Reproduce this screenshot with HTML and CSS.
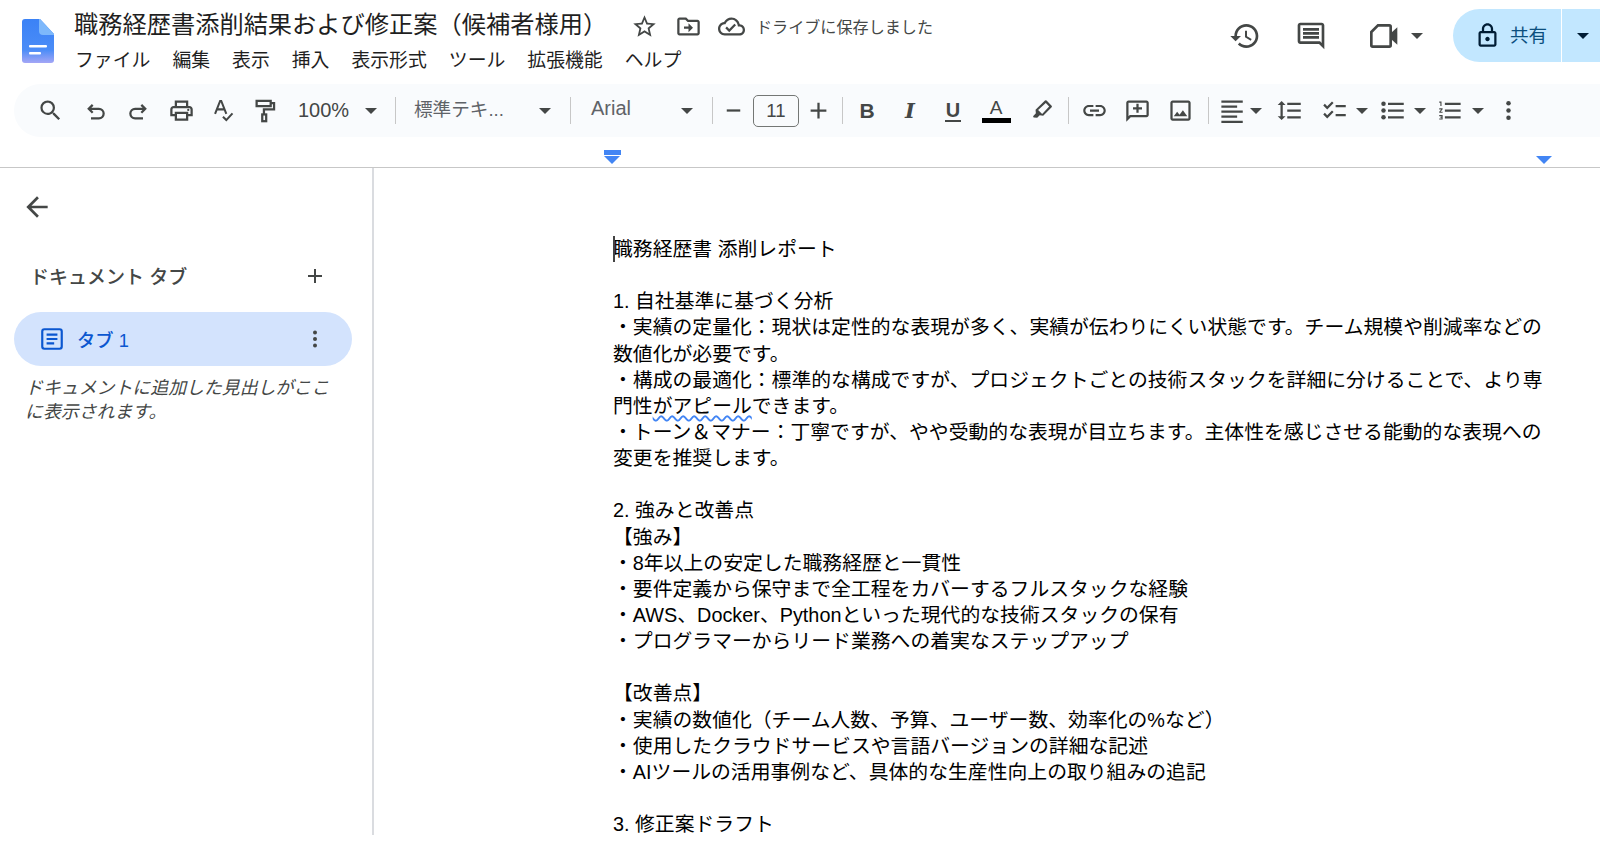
FILE: index.html
```html
<!DOCTYPE html>
<html lang="ja">
<head>
    <meta charset="UTF-8">
    <title>職務経歴書添削結果および修正案（候補者様用）</title>
    <link rel="stylesheet" href="styles.css">
</head>
<body>
<div class="app">
    <header class="header">
        <svg class="logo" viewBox="0 0 32 44">
            <defs>
                <linearGradient id="logoFill" x1="0" y1="0" x2="0" y2="1">
                    <stop offset="0" stop-color="#3b82f6"/>
                    <stop offset="0.7" stop-color="#4a8cf7"/>
                    <stop offset="1" stop-color="#a4a6f6"/>
                </linearGradient>
            </defs>
            <path fill="url(#logoFill)" d="M3 0H18L32 15V41a3 3 0 0 1-3 3H3a3 3 0 0 1-3-3V3a3 3 0 0 1 3-3Z"/>
            <path fill="#7db8fb" d="M17 0H18L32 15V16H21a4 4 0 0 1-4-4Z"/>
            <rect x="7" y="26" width="18" height="2.5" rx="1" fill="#fff"/>
            <rect x="7" y="33" width="12" height="2.5" rx="1" fill="#fff"/>
        </svg>
        <div class="title-col">
            <div class="title-row">
                <span class="doc-title">職務経歴書添削結果および修正案（候補者様用）</span>
                <svg class="icon star" viewBox="0 0 24 24"><path d="M22 9.24l-7.19-.62L12 2 9.19 8.63 2 9.24l5.46 4.73L5.82 21 12 17.27 18.18 21l-1.63-7.03L22 9.24zM12 15.4l-3.76 2.27 1-4.28-3.32-2.88 4.38-.38L12 6.1l1.71 4.04 4.38.38-3.32 2.88 1 4.28L12 15.4z"/></svg>
                <svg class="icon folder" viewBox="0 0 24 24"><path d="M20 6h-8l-2-2H4c-1.1 0-2 .9-2 2v12c0 1.1.9 2 2 2h16c1.1 0 2-.9 2-2V8c0-1.1-.9-2-2-2zm0 12H4V6h5.17l2 2H20v10zm-8-1l4-4-4-4v3H8v2h4v3z"/></svg>
                <svg class="icon cloud" viewBox="0 0 24 24"><path d="M19.35 10.04C18.67 6.59 15.64 4 12 4 9.11 4 6.6 5.64 5.35 8.04 2.34 8.36 0 10.91 0 14c0 3.31 2.69 6 6 6h13c2.76 0 5-2.24 5-5 0-2.64-2.05-4.78-4.65-4.96zM19 18H6c-2.21 0-4-1.79-4-4 0-2.05 1.53-3.76 3.56-3.97l1.07-.11.5-.95C8.08 7.14 9.94 6 12 6c2.62 0 4.88 1.86 5.39 4.43l.3 1.5 1.53.11c1.56.1 2.78 1.41 2.78 2.96 0 1.65-1.35 3-3 3zm-9-3.82l-2.09-2.09L6.5 13.5 10 17l6.01-6.01-1.41-1.41z"/></svg>
                <span class="saved">ドライブに保存しました</span>
            </div>
            <nav class="menu">
                <span>ファイル</span><span>編集</span><span>表示</span><span>挿入</span><span>表示形式</span><span>ツール</span><span>拡張機能</span><span>ヘルプ</span>
            </nav>
        </div>
        <div class="actions">
            <svg class="icon action-history" viewBox="0 0 24 24"><path d="M13 3c-4.97 0-9 4.03-9 9H1l3.89 3.89.07.14L9 12H6c0-3.87 3.13-7 7-7s7 3.13 7 7-3.13 7-7 7c-1.93 0-3.68-.79-4.94-2.06l-1.42 1.42C8.27 19.99 10.51 21 13 21c4.97 0 9-4.03 9-9s-4.03-9-9-9zm-1 5v5l4.28 2.54.72-1.21-3.5-2.08V8H12z"/></svg>
            <svg class="icon action-comment" viewBox="0 0 24 24"><path d="M21.99 4c0-1.1-.89-2-1.99-2H4c-1.1 0-2 .9-2 2v12c0 1.1.9 2 2 2h14l4 4-.01-18zM20 4v13.17L18.83 16H4V4h16zM6 12h12v2H6zm0-3h12v2H6zm0-3h12v2H6z"/></svg>
            <svg class="icon action-meet" viewBox="0 0 24 24"><path class="outline" d="M2.5 9 7.5 4H16a1 1 0 0 1 1 1v14a1 1 0 0 1-1 1H3.500a1 1 0 0 1-1-1Z"/><path d="M17 10 22 5.500V18.500L17 14Z"/></svg>
            <i class="caret action-caret"></i>
            <div class="share">
                <div class="share-main">
                    <svg class="icon lock" viewBox="0 0 24 24"><path d="M18 8h-1V6c0-2.76-2.24-5-5-5S7 3.24 7 6v2H6c-1.1 0-2 .9-2 2v10c0 1.1.9 2 2 2h12c1.1 0 2-.9 2-2V10c0-1.1-.9-2-2-2zM9 6c0-1.66 1.34-3 3-3s3 1.34 3 3v2H9V6zm9 14H6V10h12v10zm-6-3c1.1 0 2-.9 2-2s-.9-2-2-2-2 .9-2 2 .9 2 2 2z"/></svg>
                    <span class="share-label">共有</span>
                </div>
                <div class="share-more"><i class="caret caret-dark"></i></div>
            </div>
        </div>
    </header>

    <div class="toolbar">
        <div class="btn btn-search"><svg class="icon" viewBox="0 0 24 24"><path d="M15.5 14h-.79l-.28-.27A6.471 6.471 0 0 0 16 9.500 6.500 6.500 0 1 0 9.500 16c1.610 0 3.090-.59 4.230-1.570l.27.28v.79l5 4.990L20.490 19l-4.990-5zm-6 0C7.010 14 5 11.990 5 9.500S7.010 5 9.500 5 14 7.010 14 9.500 11.990 14 9.500 14z"/></svg></div>
        <div class="btn"><svg class="icon" viewBox="0 0 24 24"><path class="outline" d="M9.500 7 6 10.500 9.500 14M6 10.500H15a4 4 0 0 1 0 8.500H8"/></svg></div>
        <div class="btn"><svg class="icon" viewBox="0 0 24 24"><path class="outline" d="M14.500 7 18 10.500 14.500 14M18 10.500H9a4 4 0 0 0 0 8.500H16"/></svg></div>
        <div class="btn"><svg class="icon" viewBox="0 0 24 24"><path d="M19 8h-1V3H6v5H5c-1.660 0-3 1.340-3 3v6h4v4h12v-4h4v-6c0-1.660-1.340-3-3-3zM8 5h8v3H8V5zm8 12v2H8v-4h8v2zm2-2v-2H6v2H4v-4c0-.55.45-1 1-1h14c.55 0 1 .45 1 1v4h-2z"/><circle cx="18" cy="11.500" r="1"/></svg></div>
        <div class="btn btn-narrow"><svg class="icon" viewBox="0 0 24 24"><path class="outline thin" d="M4.500 15 9 3.500H10L14.500 15M6 11H13M11.500 17.500 14.500 20.500 20 14.500"/></svg></div>
        <div class="btn btn-narrow"><svg class="icon" viewBox="0 0 24 24"><path class="outline" d="M17.500 3.500H5V8H17.500ZM17.500 5.500H20.500V11H11.500V15"/><rect class="outline" x="10" y="15.500" width="3.500" height="6"/></svg></div>
        <div class="select select-zoom"><span>100%</span><i class="caret"></i></div>
        <div class="sep"></div>
        <div class="select select-style"><span class="select-label label-style">標準テキ...</span><i class="caret"></i></div>
        <div class="sep"></div>
        <div class="select select-font"><span class="select-label">Arial</span><i class="caret"></i></div>
        <div class="sep"></div>
        <div class="font-size">
            <svg class="icon" viewBox="0 0 24 24"><path d="M6 11h12v2H6z"/></svg>
            <div class="size-box">11</div>
            <svg class="icon" viewBox="0 0 24 24"><path d="M19 13h-6v6h-2v-6H5v-2h6V5h2v6h6v2z"/></svg>
        </div>
        <div class="sep"></div>
        <div class="btn btn-bold">B</div>
        <div class="btn btn-italic">I</div>
        <div class="btn"><span class="btn-under">U</span></div>
        <div class="btn"><span class="btn-color">A</span></div>
        <div class="btn btn-mark"><svg class="icon" viewBox="0 0 24 24"><path d="M16.500 3.200 21 7.700a1 1 0 0 1 0 1.400L13.500 16.600 10.400 16.200 8.200 18.400 5 18.200 4.500 17 7 14.500 6.700 11.400 15.100 3.200a1 1 0 0 1 1.400 0ZM9 11.500 12.600 15 18.800 8.400 15.800 5.400Z" fill-rule="evenodd"/></svg></div>
        <div class="sep sep-color"></div>
        <div class="btn btn-first"><svg class="icon" viewBox="0 0 24 24"><path d="M3.900 12c0-1.710 1.390-3.100 3.100-3.100h4V7H7c-2.760 0-5 2.240-5 5s2.240 5 5 5h4v-1.900H7c-1.710 0-3.100-1.390-3.100-3.100zM8 13h8v-2H8v2zm9-6h-4v1.900h4c1.710 0 3.100 1.390 3.100 3.100s-1.390 3.100-3.100 3.100h-4V17h4c2.760 0 5-2.240 5-5s-2.240-5-5-5z"/></svg></div>
        <div class="btn"><svg class="icon" viewBox="0 0 24 24"><path d="M20 3H4c-1.100 0-2 .9-2 2v17l4-4h14c1.100 0 2-.9 2-2V5c0-1.100-.9-2-2-2zm0 13H5.170L4 17.170V5h16v11z"/><path d="M11 6h2v3h3v2h-3v3h-2v-3H8V9h3z"/></svg></div>
        <div class="btn"><svg class="icon" viewBox="0 0 24 24"><path d="M19 5v14H5V5h14m0-2H5c-1.100 0-2 .9-2 2v14c0 1.100.9 2 2 2h14c1.100 0 2-.9 2-2V5c0-1.100-.9-2-2-2zm-4.860 8.860l-3 3.870L9 13.140 6 17h12l-3.860-5.140z"/></svg></div>
        <div class="sep sep-list"></div>
        <div class="btn btn-align"><svg class="icon" viewBox="0 0 24 24"><path d="M3 3h19v2H3zM3 7.500h14v2H3zM3 12h19v2H3zM3 16.500h14v2H3zM3 21h19v2H3z"/></svg></div>
        <div class="caret-wrap caret-align"><i class="caret"></i></div>
        <div class="btn btn-spacing"><svg class="icon" viewBox="0 0 24 24"><path d="M6 7h2.500L5 3.500 1.500 7H4v10H1.500L5 20.500 8.500 17H6V7zm4-2v2h12V5H10zm0 14h12v-2H10v2zm0-6h12v-2H10v2z"/></svg></div>
        <div class="btn btn-list"><svg class="icon" viewBox="0 0 24 24"><path d="M22 7h-9v2h9V7zm0 8h-9v2h9v-2zM5.540 11L2 7.460l1.410-1.410 2.120 2.120 4.240-4.240 1.410 1.410L5.540 11zm0 8L2 15.460l1.410-1.410 2.120 2.120 4.240-4.240 1.410 1.410L5.540 19z"/></svg></div>
        <div class="caret-wrap"><i class="caret"></i></div>
        <div class="btn btn-list"><svg class="icon" viewBox="0 0 24 24"><circle cx="4" cy="6" r="2"/><circle cx="4" cy="12" r="2"/><circle cx="4" cy="18" r="2"/><path d="M8 5h14v2H8zM8 11h14v2H8zM8 17h14v2H8z"/></svg></div>
        <div class="caret-wrap"><i class="caret"></i></div>
        <div class="btn btn-list"><svg class="icon" viewBox="0 0 24 24"><path d="M2 17h2v.5H3v1h1v.5H2v1h3v-4H2v1zm1-9h1V4H2v1h1v3zm-1 3h1.800L2 13.100v.9h3v-1H3.200L5 10.900V10H2v1zm5-6v2h14V5H7zm0 14h14v-2H7v2zm0-6h14v-2H7v2z"/></svg></div>
        <div class="caret-wrap"><i class="caret"></i></div>
        <div class="btn btn-more"><svg class="icon" viewBox="0 0 24 24"><circle cx="12" cy="5.500" r="2"/><circle cx="12" cy="12" r="2"/><circle cx="12" cy="18.500" r="2"/></svg></div>
    </div>

    <div class="ruler">
        <div class="marker-left"></div>
        <div class="marker-right"></div>
    </div>

    <main class="main">
        <aside class="sidebar">
            <svg class="icon back" viewBox="0 0 24 24"><path d="M20 11H7.830l5.590-5.590L12 4l-8 8 8 8 1.410-1.410L7.830 13H20v-2z"/></svg>
            <div class="tabs-head">
                <span>ドキュメント タブ</span>
                <svg class="icon" viewBox="0 0 24 24"><path d="M19 13h-6v6h-2v-6H5v-2h6V5h2v6h6v2z"/></svg>
            </div>
            <div class="tab">
                <svg class="tab-icon" viewBox="0 0 24 24"><rect class="tab-outline" x="3" y="3" width="18" height="18" rx="2"/><path d="M7 7h10v2H7zM7 11h10v2H7zM7 15h7v2H7z"/></svg>
                <span class="tab-name">タブ 1</span>
                <svg class="icon tab-more" viewBox="0 0 24 24"><circle cx="12" cy="5.500" r="2"/><circle cx="12" cy="12" r="2"/><circle cx="12" cy="18.500" r="2"/></svg>
            </div>
            <p class="hint">ドキュメントに追加した見出しがここに表示されます。</p>
        </aside>
        <section class="doc">
            <div class="line"><span class="cursor"></span>職務経歴書 添削レポート</div>
            <div class="line"></div>
            <div class="line">1. 自社基準に基づく分析</div>
            <div class="line">・実績の定量化：現状は定性的な表現が多く、実績が伝わりにくい状態です。チーム規模や削減率などの</div>
            <div class="line">数値化が必要です。</div>
            <div class="line">・構成の最適化：標準的な構成ですが、プロジェクトごとの技術スタックを詳細に分けることで、より専</div>
            <div class="line">門性<span class="squiggle">がアピール</span>できます。</div>
            <div class="line">・トーン＆マナー：丁寧ですが、やや受動的な表現が目立ちます。主体性を感じさせる能動的な表現への</div>
            <div class="line">変更を推奨します。</div>
            <div class="line"></div>
            <div class="line">2. 強みと改善点</div>
            <div class="line">【強み】</div>
            <div class="line">・8年以上の安定した職務経歴と一貫性</div>
            <div class="line">・要件定義から保守まで全工程をカバーするフルスタックな経験</div>
            <div class="line">・AWS、Docker、Pythonといった現代的な技術スタックの保有</div>
            <div class="line">・プログラマーからリード業務への着実なステップアップ</div>
            <div class="line"></div>
            <div class="line">【改善点】</div>
            <div class="line">・実績の数値化（チーム人数、予算、ユーザー数、効率化の%など）</div>
            <div class="line">・使用したクラウドサービスや言語バージョンの詳細な記述</div>
            <div class="line">・AIツールの活用事例など、具体的な生産性向上の取り組みの追記</div>
            <div class="line"></div>
            <div class="line">3. 修正案ドラフト</div>
        </section>
    </main>
</div>
</body>
</html>
```

FILE: styles.css
```css
* {
    box-sizing: border-box;
}
html, body {
    margin: 0;
    height: 100%;
    overflow: hidden;
    background: #fff;
}
body {
    font-family: "Liberation Sans", "Noto Sans CJK JP", sans-serif;
    color: #1f1f1f;
}
.app {
    height: 835px;
    display: flex;
    flex-direction: column;
    overflow: hidden;
}
.icon {
    width: 27px;
    height: 27px;
    fill: #444746;
    flex: none;
    display: block;
}
.outline {
    fill: none;
    stroke: #444746;
    stroke-width: 2;
}
.thin {
    stroke-width: 1.800;
}

/* header */
.header {
    height: 84px;
    display: flex;
    padding-left: 22px;
    flex: none;
}
.logo {
    width: 32px;
    height: 44px;
    margin-top: 19px;
    flex: none;
}
.title-col {
    margin-left: 21px;
    flex: none;
}
.title-row {
    height: 34px;
    margin-top: 9px;
    display: flex;
    align-items: center;
}
.doc-title {
    font-size: 24.240px;
    line-height: 34px;
    width: 556px;
    margin-left: -1px;
    white-space: nowrap;
    position: relative;
    top: -1px;
}
.star {
    margin-left: 1px;
}
.folder {
    margin-left: 17px;
}
.cloud {
    margin-left: 16px;
}
.saved {
    margin-left: 11px;
    font-size: 16.100px;
    color: #444746;
}
.menu {
    display: flex;
    gap: 22px;
    margin-top: 4px;
    font-size: 18.850px;
    line-height: 28px;
}
.actions {
    margin-left: auto;
    display: flex;
    align-items: flex-start;
    padding-top: 9px;
}
.action-history, .action-comment {
    width: 32px;
    height: 32px;
    margin-top: 11px;
}
.action-comment {
    margin-left: 34px;
}
.action-meet {
    width: 32px;
    height: 32px;
    margin-top: 11px;
    margin-left: 41px;
}
.action-caret {
    margin: 24px 0 0 11px;
}
.share {
    width: 147px;
    height: 53px;
    margin-left: 30px;
    background: #c2e7ff;
    border-radius: 27px 0 0 27px;
    display: flex;
    color: #0b4f7e;
    font-size: 18.600px;
}
.share-main {
    width: 108px;
    display: flex;
    align-items: center;
    padding-left: 21px;
    gap: 9px;
}
.share-label {
    margin-bottom: 4px;
}
.lock {
    fill: #001d35;
    margin-bottom: 1px;
}
.share-more {
    flex: 1;
    border-left: 1px solid #fff;
    display: flex;
    align-items: center;
    justify-content: center;
    padding-left: 4px;
}
.caret {
    display: block;
    width: 0;
    height: 0;
    border-left: 6px solid transparent;
    border-right: 6px solid transparent;
    border-top: 6px solid #444746;
    flex: none;
}
.caret-dark {
    border-top-color: #001d35;
}

/* toolbar */
.toolbar {
    height: 53px;
    margin-left: 14px;
    padding-left: 14.500px;
    background: #f9fbfd;
    border-radius: 27px 0 0 27px;
    display: flex;
    align-items: center;
    flex: none;
    color: #444746;
}
.btn {
    width: 43px;
    height: 32px;
    display: flex;
    align-items: center;
    justify-content: center;
    flex: none;
}
.btn-search {
    margin-right: 2px;
}
.btn-narrow {
    width: 41px;
}
.select {
    display: flex;
    align-items: center;
    justify-content: space-between;
    flex: none;
    font-size: 18.600px;
}
.select-label {
    position: relative;
    top: -2px;
}
.label-style {
    top: -3px;
}
.select-zoom {
    width: 110.500px;
    padding: 0 18px 0 13.500px;
    font-size: 20px;
}
.select-style {
    width: 174px;
    padding: 0 19px 0 18px;
    color: #5f6368;
}
.select-font {
    width: 141px;
    padding: 0 19px 0 20px;
    color: #5f6368;
    font-size: 20px;
}
.sep {
    width: 1px;
    height: 27px;
    background: #c7c7c7;
    flex: none;
}
.sep-color {
    margin-left: 5.500px;
}
.sep-list {
    margin-left: 6.500px;
}
.font-size {
    width: 129px;
    padding: 0 10px 0 7px;
    display: flex;
    align-items: center;
    justify-content: space-between;
    flex: none;
}
.size-box {
    width: 46px;
    height: 32px;
    border: 1px solid #747775;
    border-radius: 5px;
    display: flex;
    align-items: center;
    justify-content: center;
    font-size: 18.600px;
    color: #444746;
}
.btn-bold {
    margin-left: 2.500px;
    font-weight: bold;
    font-size: 21px;
}
.btn-italic {
    font-family: "DejaVu Serif", serif;
    font-style: italic;
    font-weight: bold;
    font-size: 21px;
}
.btn-under {
    font-size: 20px;
    font-weight: bold;
    line-height: 20px;
    border-bottom: 2px solid #444746;
    padding: 0 1px;
}
.btn-color {
    width: 29px;
    text-align: center;
    font-size: 19px;
    line-height: 21px;
    border-bottom: 5px solid #000;
    position: relative;
    top: -1px;
}
.btn-mark {
    margin-left: 2px;
}
.btn-first {
    margin-left: 3.500px;
}
.btn-align {
    width: 30px;
    margin-left: 7px;
}
.caret-wrap {
    width: 13px;
    display: flex;
    justify-content: center;
    flex: none;
}
.caret-align {
    width: 20px;
}
.btn-spacing {
    margin-left: 1.500px;
    margin-right: 2px;
}
.caret-wrap + .btn-list {
    margin-left: 2px;
}
.btn-more {
    margin-left: 2px;
}

/* ruler */
.ruler {
    height: 31px;
    border-bottom: 1px solid #c7c7c7;
    position: relative;
    flex: none;
}
.marker-left {
    position: absolute;
    left: 604px;
    top: 13px;
    width: 17px;
    height: 5px;
    background: #4285f4;
}
.marker-left::after {
    content: "";
    position: absolute;
    left: 0;
    top: 6px;
    border-left: 8.500px solid transparent;
    border-right: 8.500px solid transparent;
    border-top: 8px solid #4285f4;
}
.marker-right {
    position: absolute;
    left: 1536px;
    top: 19px;
    border-left: 8px solid transparent;
    border-right: 8px solid transparent;
    border-top: 8px solid #4285f4;
}

/* sidebar and document */
.main {
    flex: 1;
    display: flex;
    min-height: 0;
}
.sidebar {
    width: 374px;
    flex: none;
    border-right: 2px solid #dadce0;
    padding: 23px 0 0 14px;
}
.back {
    width: 32px;
    height: 32px;
    margin-left: 7px;
}
.tabs-head {
    margin-top: 39px;
    width: 313px;
    padding-left: 16px;
    display: flex;
    justify-content: space-between;
    align-items: center;
    font-size: 19px;
    font-weight: 500;
    color: #444746;
}
.tabs-head .icon {
    width: 24px;
    height: 24px;
}
.tab {
    width: 338px;
    height: 54px;
    margin-top: 23px;
    background: #d3e3fd;
    border-radius: 27px;
    display: flex;
    align-items: center;
    padding-left: 25px;
    color: #0b57d0;
    font-size: 18.300px;
    font-weight: 500;
}
.tab-icon {
    width: 26px;
    height: 26px;
    fill: #0b57d0;
    flex: none;
}
.tab-outline {
    fill: none;
    stroke: #0b57d0;
    stroke-width: 2;
}
.tab-name {
    margin-left: 12px;
}
.tab-more {
    margin-left: auto;
    margin-right: 25px;
    width: 24px;
    height: 24px;
}
.hint {
    width: 318px;
    margin: 10px 0 0 11px;
    font-size: 17.900px;
    line-height: 24px;
    font-style: italic;
    color: #444746;
}
.doc {
    flex: 1;
    padding: 68px 0 0 239px;
    color: #000;
    font-size: 19.830px;
    min-width: 0;
}
.line {
    height: 26.150px;
    line-height: 26.150px;
    white-space: nowrap;
    position: relative;
}
.cursor {
    position: absolute;
    left: 0;
    top: 0;
    width: 2px;
    height: 26px;
    background: #444;
}
.squiggle {
    text-decoration: underline wavy #4285f4 1.500px;
    text-underline-offset: 2px;
}
```
